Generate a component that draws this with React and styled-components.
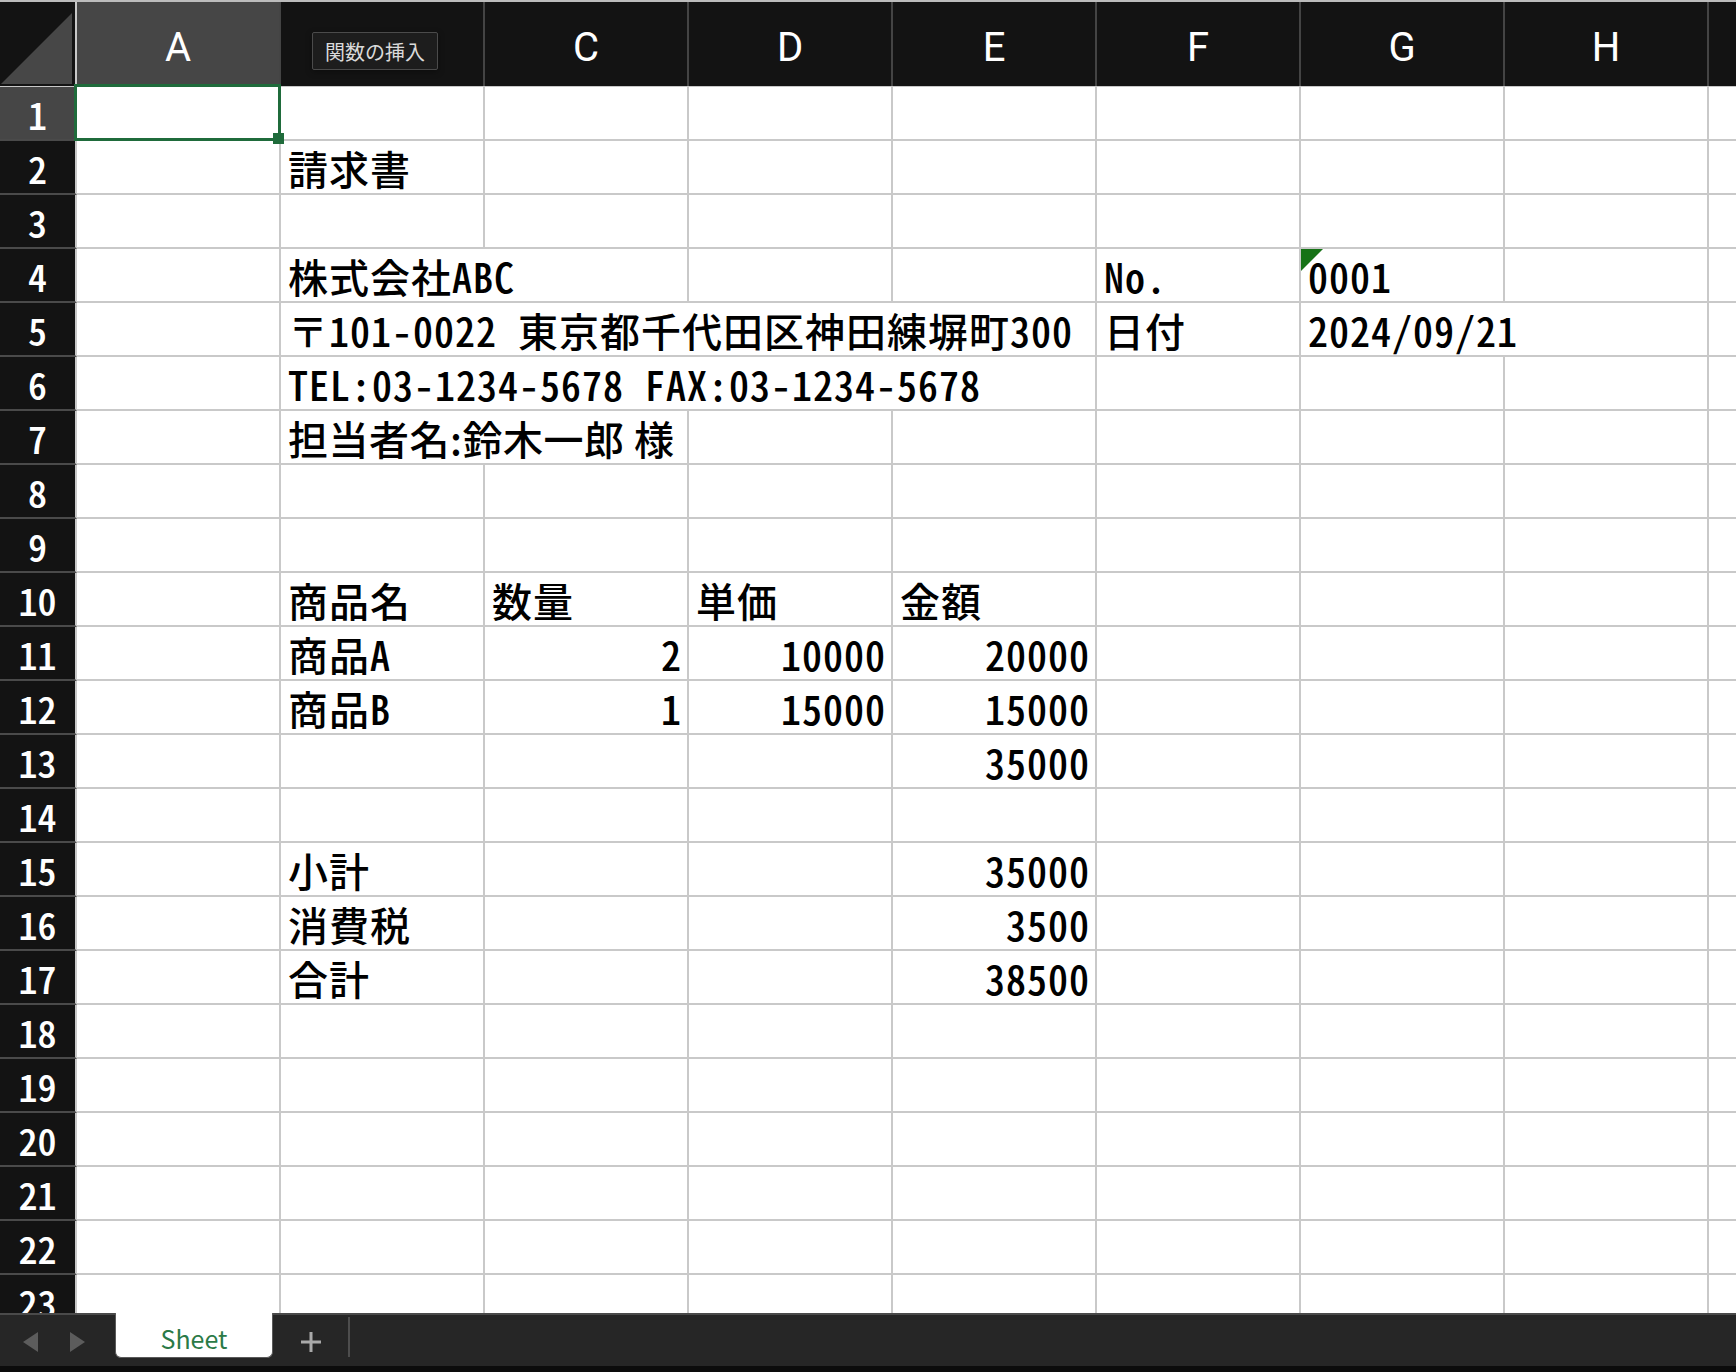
import React from "react";
import styled, { createGlobalStyle } from "styled-components";

const COLS = ["A", "B", "C", "D", "E", "F", "G", "H", "I"];
const ROW_COUNT = 23;
const TEMPLATE = "77px repeat(9, 204px)";

const GlobalStyle = createGlobalStyle`
  html, body { margin: 0; padding: 0; background: #ffffff; }
  body { font-family: "Noto Sans CJK JP", "Noto Sans", sans-serif; }
  #root { width: 1736px; height: 1372px; }
`;

const Window = styled.div`
  width: 1736px;
  height: 1372px;
  box-sizing: border-box;
  border-top: 2px solid #bcbcbc;
  display: flex;
  flex-direction: column;
  overflow: hidden;
  background: #ffffff;
`;

const Sheet = styled.div`
  flex: 1;
  min-height: 0;
  overflow: hidden;
  display: flex;
  flex-direction: column;
`;

const HeaderRow = styled.div`
  display: grid;
  grid-template-columns: ${TEMPLATE};
  height: 85px;
  flex-shrink: 0;
  box-sizing: border-box;
  border-bottom: 1px solid #c8c8c8;
  background: #131313;
`;

const Corner = styled.div`
  box-sizing: border-box;
  border-right: 2px solid #c8c8c8;
  background: #131313;
  display: flex;
  align-items: flex-end;
  justify-content: flex-end;
  padding: 0 3px 2px 0;
`;

const ColHeader = styled.div`
  position: relative;
  box-sizing: border-box;
  border-right: 2px solid #444444;
  background: ${(p) => (p.$active ? "#464646" : "#131313")};
  color: #ffffff;
  font-family: Roboto, "Liberation Sans", sans-serif;
  font-size: 40px;
  display: flex;
  align-items: center;
  justify-content: center;
  padding-top: 6px;
`;

const FunctionButton = styled.div`
  position: absolute;
  left: 31px;
  top: 30px;
  height: 38px;
  box-sizing: border-box;
  padding: 0 12px;
  display: flex;
  align-items: center;
  background: #1d1d1d;
  border: 1px solid #4b4b4b;
  border-radius: 2px;
  color: #dadada;
  font-family: "Noto Sans CJK JP", sans-serif;
  font-size: 20px;
  white-space: nowrap;
  box-shadow: 0 2px 6px rgba(0, 0, 0, 0.35);
`;

const Row = styled.div`
  display: grid;
  grid-template-columns: ${TEMPLATE};
  height: 54px;
  flex-shrink: 0;
`;

const RowHeader = styled.div`
  box-sizing: border-box;
  border-right: 2px solid #c8c8c8;
  border-bottom: 2px solid #4a4a4a;
  background: ${(p) => (p.$active ? "#464646" : "#131313")};
  color: #ffffff;
  font-family: "Noto Sans CJK JP", sans-serif;
  font-feature-settings: "hwid";
  font-weight: 500;
  font-size: 38px;
  line-height: 1;
  display: flex;
  align-items: center;
  justify-content: center;
  padding-top: 2px;
`;

const Cell = styled.div`
  position: relative;
  grid-column: span ${(p) => p.$span || 1};
  box-sizing: border-box;
  border-right: 2px solid #c9c9c9;
  border-bottom: 2px solid #c9c9c9;
  background: #ffffff;
  color: #000000;
  font-family: "Noto Sans CJK JP", sans-serif;
  font-feature-settings: ${(p) => (p.$tight ? "normal" : '"hwid"')};
  letter-spacing: ${(p) => (p.$tight ? "0.5px" : "1px")};
  font-weight: 500;
  font-size: 40px;
  line-height: 1;
  white-space: nowrap;
  display: flex;
  align-items: center;
  justify-content: ${(p) => (p.$align === "right" ? "flex-end" : "flex-start")};
  padding: 1px 5px 0 7px;
  overflow: visible;
`;

const Selection = styled.div`
  position: absolute;
  left: -3px;
  top: -3px;
  right: -2px;
  bottom: -2px;
  border: 3px solid #1f6b3b;
  pointer-events: none;
  z-index: 2;
`;

const FillHandle = styled.div`
  position: absolute;
  right: -6px;
  bottom: -6px;
  width: 11px;
  height: 11px;
  background: #1f6b3b;
`;

const ErrorFlag = styled.span`
  position: absolute;
  left: 0;
  top: 0;
  width: 22px;
  height: 22px;
  background: #167216;
  clip-path: polygon(0 0, 100% 0, 0 100%);
`;

const TabBar = styled.div`
  height: 53px;
  flex-shrink: 0;
  box-sizing: border-box;
  border-top: 2px solid #4a4a4a;
  background: #262626;
  display: flex;
  align-items: flex-start;
`;

const Nav = styled.div`
  width: 115px;
  height: 51px;
  display: flex;
  align-items: center;
  gap: 32px;
  padding: 2px 0 0 23px;
  box-sizing: border-box;
`;

const Arrow = styled.span`
  width: 0;
  height: 0;
  border-top: 10px solid transparent;
  border-bottom: 10px solid transparent;
  ${(p) =>
    p.$dir === "left"
      ? "border-right: 15px solid #5c5c5c;"
      : "border-left: 15px solid #5c5c5c;"}
`;

const SheetTab = styled.div`
  width: 158px;
  height: 45px;
  margin-top: -2px;
  box-sizing: border-box;
  background: #ffffff;
  border: 1px solid #5a5a5a;
  border-top: none;
  border-radius: 0 0 6px 6px;
  display: flex;
  align-items: center;
  justify-content: center;
  padding-top: 6px;
  color: #2b7a47;
  font-family: "Noto Sans CJK JP", "Noto Sans", sans-serif;
  font-size: 25px;
`;

const AddButton = styled.div`
  width: 75px;
  height: 51px;
  display: flex;
  align-items: center;
  justify-content: center;
  padding-top: 2px;
  box-sizing: border-box;
`;

const Divider = styled.div`
  width: 2px;
  height: 40px;
  margin-top: 2px;
  background: #4d4d4d;
`;

const BottomStrip = styled.div`
  height: 6px;
  flex-shrink: 0;
  background: #0c0c0c;
`;

const DATA = {
  2: [{ c: 1, t: "請求書" }],
  4: [
    { c: 1, t: "株式会社ABC", span: 2 },
    { c: 5, t: "No." },
    { c: 6, t: "0001", flag: true },
  ],
  5: [
    { c: 1, t: "〒101-0022 東京都千代田区神田練塀町300", span: 4 },
    { c: 5, t: "日付" },
    { c: 6, t: "2024/09/21", span: 2 },
  ],
  6: [{ c: 1, t: "TEL:03-1234-5678 FAX:03-1234-5678", span: 4 }],
  7: [{ c: 1, t: "担当者名:鈴木一郎 様", span: 2, tight: true }],
  10: [
    { c: 1, t: "商品名" },
    { c: 2, t: "数量" },
    { c: 3, t: "単価" },
    { c: 4, t: "金額" },
  ],
  11: [
    { c: 1, t: "商品A" },
    { c: 2, t: "2", r: true },
    { c: 3, t: "10000", r: true },
    { c: 4, t: "20000", r: true },
  ],
  12: [
    { c: 1, t: "商品B" },
    { c: 2, t: "1", r: true },
    { c: 3, t: "15000", r: true },
    { c: 4, t: "15000", r: true },
  ],
  13: [{ c: 4, t: "35000", r: true }],
  15: [
    { c: 1, t: "小計" },
    { c: 4, t: "35000", r: true },
  ],
  16: [
    { c: 1, t: "消費税" },
    { c: 4, t: "3500", r: true },
  ],
  17: [
    { c: 1, t: "合計" },
    { c: 4, t: "38500", r: true },
  ],
};

function CornerMark() {
  return (
    <svg width="71" height="71" viewBox="0 0 71 71">
      <polygon points="0,71 71,0 71,71" fill="#474747" />
    </svg>
  );
}

function SheetRow({ index }) {
  const defs = DATA[index] || [];
  const cells = [];
  for (let c = 0; c < COLS.length; ) {
    const d = defs.find((x) => x.c === c);
    const span = d && d.span ? d.span : 1;
    const selected = index === 1 && c === 0;
    cells.push(
      <Cell
        key={c}
        $span={span}
        $tight={d && d.tight}
        $align={d && d.r ? "right" : "left"}
      >
        {d && d.flag && <ErrorFlag />}
        {d ? d.t : null}
        {selected && (
          <Selection>
            <FillHandle />
          </Selection>
        )}
      </Cell>
    );
    c += span;
  }
  return (
    <Row>
      <RowHeader $active={index === 1}>{index}</RowHeader>
      {cells}
    </Row>
  );
}

export default function App() {
  const rows = Array.from({ length: ROW_COUNT }, (_, i) => i + 1);
  return (
    <>
      <GlobalStyle />
      <Window>
        <Sheet>
          <HeaderRow>
            <Corner>
              <CornerMark />
            </Corner>
            {COLS.map((col, i) => (
              <ColHeader key={col} $active={i === 0}>
                {col === "B" ? (
                  <FunctionButton>関数の挿入</FunctionButton>
                ) : (
                  col
                )}
              </ColHeader>
            ))}
          </HeaderRow>
          {rows.map((r) => (
            <SheetRow key={r} index={r} />
          ))}
        </Sheet>
        <TabBar>
          <Nav>
            <Arrow $dir="left" />
            <Arrow $dir="right" />
          </Nav>
          <SheetTab>Sheet</SheetTab>
          <AddButton>
            <svg width="22" height="22" viewBox="0 0 22 22">
              <path d="M11 1v20M1 11h20" stroke="#a9a9a9" strokeWidth="3" />
            </svg>
          </AddButton>
          <Divider />
        </TabBar>
        <BottomStrip />
      </Window>
    </>
  );
}
